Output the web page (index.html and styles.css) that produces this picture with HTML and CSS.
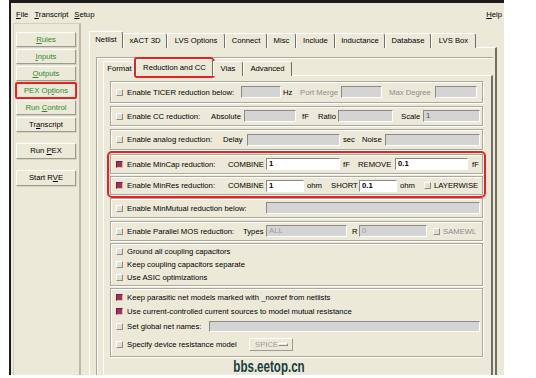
FILE: index.html
```html
<!DOCTYPE html>
<html lang="en">
<head>
  <meta charset="UTF-8">
  <title>Calibre Interactive - PEX</title>
  <link rel="stylesheet" href="styles.css">
</head>
<body>
  <div class="window">
    <div class="menubar">
      <span class="menu"><u>F</u>ile</span>
      <span class="menu"><u>T</u>ranscript</span>
      <span class="menu"><u>S</u>etup</span>
      <span class="menu help"><u>H</u>elp</span>
    </div>

    <div class="main">
      <div class="side">
        <div class="group">
          <div class="btn green"><u>R</u>ules</div>
          <div class="btn green"><u>I</u>nputs</div>
          <div class="btn green"><u>O</u>utputs</div>
          <div class="btn green marked">PEX Op<u>t</u>ions</div>
          <div class="btn green">Run <u>C</u>ontrol</div>
          <div class="btn">Tr<u>a</u>nscript</div>
        </div>
        <div class="group">
          <div class="btn tall">Run <u>P</u>EX</div>
        </div>
        <div class="group">
          <div class="btn tall">Start R<u>V</u>E</div>
        </div>
      </div>

      <div class="notebook">
        <div class="tabs">
          <div class="tab active t-netlist">Netlist</div>
          <div class="tab t-xact">xACT 3D</div>
          <div class="tab t-lvs">LVS Options</div>
          <div class="tab t-connect">Connect</div>
          <div class="tab t-misc">Misc</div>
          <div class="tab t-include">Include</div>
          <div class="tab t-induct">Inductance</div>
          <div class="tab t-db">Database</div>
          <div class="tab t-box">LVS Box</div>
        </div>
        <div class="page">
          <div class="inner">
            <div class="tabs sub">
              <div class="tab t-format">Format</div>
              <div class="tab active marked t-reduce">Reduction and CC</div>
              <div class="tab t-vias">Vias</div>
              <div class="tab t-adv">Advanced</div>
            </div>
            <div class="subpage">
              <div class="row r1">
                <span class="cb"></span>
                <span class="lbl w114">Enable TICER reduction below:</span>
                <span class="entry w40"></span>
                <span class="txt w19 pl2">Hz</span>
                <span class="txt dim w41">Port Merge</span>
                <span class="entry w41"></span>
                <span class="txt dim w53 pl7">Max Degree</span>
                <span class="entry w42"></span>
              </div>
              <div class="row r2">
                <span class="cb"></span>
                <span class="lbl w84">Enable CC reduction:</span>
                <span class="txt w33">Absolute</span>
                <span class="entry w52"></span>
                <span class="txt w22 pl6">fF</span>
                <span class="txt w20">Ratio</span>
                <span class="entry w55"></span>
                <span class="txt w30 pl8">Scale</span>
                <span class="entry w57 val">1</span>
              </div>
              <div class="row r3">
                <span class="cb"></span>
                <span class="lbl w96">Enable analog reduction:</span>
                <span class="txt w24">Delay</span>
                <span class="entry w93"></span>
                <span class="txt w22 pl3">sec</span>
                <span class="txt w23">Noise</span>
                <span class="entry w95"></span>
              </div>

              <div class="marked-rows">
                <div class="row r4">
                  <span class="cb on"></span>
                  <span class="lbl w101">Enable MinCap reduction:</span>
                  <span class="txt w38">COMBINE</span>
                  <span class="entry white w74">1</span>
                  <span class="txt w18 pl3">fF</span>
                  <span class="txt w37">REMOVE</span>
                  <span class="entry white w73">0.1</span>
                  <span class="txt pl4">fF</span>
                </div>
                <div class="row r5">
                  <span class="cb on"></span>
                  <span class="lbl w101">Enable MinRes reduction:</span>
                  <span class="txt w38">COMBINE</span>
                  <span class="entry white w38">1</span>
                  <span class="txt w27 pl3">ohm</span>
                  <span class="txt w28">SHORT</span>
                  <span class="entry white w38">0.1</span>
                  <span class="txt w27 pl3">ohm</span>
                  <span class="cb"></span>
                  <span class="txt pl3">LAYERWISE</span>
                </div>
              </div>

              <div class="row r6">
                <span class="cb"></span>
                <span class="lbl w139">Enable MinMutual reduction below:</span>
                <span class="entry w214"></span>
              </div>
              <div class="row r7">
                <span class="cb"></span>
                <span class="lbl w116">Enable Parallel MOS reduction:</span>
                <span class="txt w23">Types</span>
                <span class="entry w81 faded">ALL</span>
                <span class="txt w12 pl5">R</span>
                <span class="entry w68 faded">0</span>
                <span class="cb gap6"></span>
                <span class="txt dim pl3">SAMEWL</span>
              </div>

              <div class="box b1">
                <div class="item"><span class="cb"></span><span class="lbl">Ground all coupling capacitors</span></div>
                <div class="item"><span class="cb"></span><span class="lbl">Keep coupling capacitors separate</span></div>
                <div class="item"><span class="cb"></span><span class="lbl">Use ASIC optimizations</span></div>
              </div>

              <div class="box b2">
                <div class="item i1"><span class="cb on"></span><span class="lbl">Keep parasitic net models marked with _noxref from netlists</span></div>
                <div class="item i2"><span class="cb on"></span><span class="lbl">Use current-controlled current sources to model mutual resistance</span></div>
                <div class="item i3"><span class="cb"></span><span class="lbl w82">Set global net names:</span><span class="entry slim w271"></span></div>
                <div class="item i4"><span class="cb"></span><span class="lbl w122">Specify device resistance model</span><span class="optmenu">SPICE<span class="bar"></span></span></div>
              </div>
            </div>
          </div>
        </div>
      </div>
    </div>

    <div class="watermark">bbs.eetop.cn</div>
  </div>
</body>
</html>
```

FILE: styles.css
```css
:root {
  --bg: #ece9d8;
  --light: #ffffff;
  --shade: #aca899;
  --dark: #716f64;
  --field: #d4d4d4;
  --green: #2e8a2e;
  --check: #a3305c;
  --mark: #e8231f;
}

* {
  box-sizing: border-box;
}

body {
  margin: 0;
  background: #fff;
  font-family: "Liberation Sans", Arial, sans-serif;
  font-size: 7.7px;
  color: #000;
}

u {
  text-decoration-thickness: 1px;
  text-underline-offset: 1px;
}

.window {
  position: relative;
  width: 495px;
  height: 375px;
  margin-left: 9px;
  background: var(--bg);
  border-top: 3px solid #1c1c1c;
  border-left: 2px solid #1c1c1c;
  overflow: hidden;
}

/* menu bar */
.menubar {
  display: flex;
  align-items: center;
  height: 18px;
  padding: 4px 2px 0 2px;
  white-space: nowrap;
}

.menu {
  padding: 0 3px;
}

.help {
  margin-left: auto;
  padding-right: 0;
}

.main {
  display: flex;
  align-items: flex-start;
}

/* left button column */
.side {
  width: 68px;
  height: 360px;
  margin: 2px 0 0 2px;
  padding: 8px 3px 0 2px;
  border: 1px solid #d3d0c2;
  border-right: 2px solid #bcb9a9;
}

.group {
  margin-bottom: 11px;
}

.btn {
  height: 15px;
  margin-bottom: 2px;
  line-height: 13px;
  text-align: center;
  border: 1px solid;
  border-color: var(--light) #9d9b8d #9d9b8d var(--light);
  box-shadow: 1px 1px 0 #d6d3c5;
  white-space: nowrap;
}

.btn.tall {
  height: 16px;
  line-height: 14px;
}

.green {
  color: var(--green);
}

.marked {
  outline: 2px solid var(--mark);
  outline-offset: -1px;
  border-radius: 1px;
}

/* notebooks */
.notebook {
  width: 408px;
  margin: 11px 0 0 8px;
}

.tabs {
  display: flex;
  align-items: flex-end;
  height: 16px;
  position: relative;
  z-index: 1;
  margin-bottom: -1px;
}

.tab {
  height: 15px;
  line-height: 13px;
  text-align: center;
  border: 1px solid;
  border-bottom: none;
  border-color: var(--light) var(--dark) transparent var(--light);
  border-top-right-radius: 3px;
  background: var(--bg);
  white-space: nowrap;
}

.tab.active {
  height: 17px;
  line-height: 15px;
}

.t-netlist { width: 34px; }
.t-xact { width: 44px; }
.t-lvs { width: 58px; }
.t-connect { width: 42px; }
.t-misc { width: 29px; }
.t-include { width: 39px; }
.t-induct { width: 50px; }
.t-db { width: 46px; }
.t-box { width: 45px; }

.t-format { width: 33px; }
.t-reduce { width: 77px; }
.t-vias { width: 30px; }
.t-adv { width: 49px; }

.tab.marked {
  outline-offset: 0;
}

.page {
  height: 330px;
  padding: 9px 2px 0 6px;
  border-top: 1px solid var(--light);
  border-left: 1px solid var(--light);
  border-right: 2px solid var(--dark);
}

.inner {
  height: 330px;
  padding: 3px 0 0 6px;
  border-top: 1px solid var(--shade);
  border-left: 1px solid var(--shade);
  box-shadow: inset 1px 1px 0 var(--light);
}

.sub {
  height: 15px;
}

.subpage {
  height: 300px;
  padding: 5px 8px 0 6px;
  border-top: 1px solid var(--light);
  border-left: 1px solid var(--light);
  border-right: 2px solid var(--dark);
}

/* option rows */
.row,
.box {
  border: 1px solid var(--shade);
  box-shadow: inset 1px 1px 0 var(--light), 1px 1px 0 var(--light);
}

.row {
  display: flex;
  align-items: center;
  height: 20px;
  margin-bottom: 3px;
  padding-left: 5px;
  white-space: nowrap;
}

.r1 { height: 22px; }
.r3 { height: 21px; margin-bottom: 4px; }
.r4 { margin-bottom: 2px; }
.r5 { height: 19px; margin-bottom: 0; }
.r7 { margin-bottom: 2px; }

.marked-rows {
  margin-bottom: 3px;
  outline: 2px solid var(--mark);
  outline-offset: 1px;
  border-radius: 2px;
}

.cb {
  flex: none;
  width: 7px;
  height: 7px;
  border: 1px solid;
  border-color: var(--light) #8f8d80 #8f8d80 var(--light);
  background: #e2dfd0;
}

.cb.on {
  border-color: #6e1f3e #c9c6b8 #c9c6b8 #6e1f3e;
  background: var(--check);
}

.lbl {
  flex: none;
  margin-left: 4px;
}

.txt {
  flex: none;
}

.dim {
  color: #8c8c8c;
}

.entry {
  flex: none;
  height: 12px;
  padding-left: 2px;
  line-height: 10px;
  background: var(--field);
  border: 1px solid;
  border-color: #8a8a86 var(--light) var(--light) #8a8a86;
}

.entry.white {
  background: #fff;
  font-weight: bold;
}

.entry.val {
  color: #555;
}

.entry.faded {
  color: #9c9c9c;
}

.entry.slim {
  height: 11px;
}

.pl2 { padding-left: 2px; }
.pl3 { padding-left: 3px; }
.pl4 { padding-left: 4px; }
.pl5 { padding-left: 5px; }
.pl6 { padding-left: 6px; }
.pl7 { padding-left: 7px; }
.pl8 { padding-left: 8px; }
.gap6 { margin-left: 6px; }

.w12 { width: 12px; }
.w18 { width: 18px; }
.w19 { width: 19px; }
.w20 { width: 20px; }
.w22 { width: 22px; }
.w23 { width: 23px; }
.w24 { width: 24px; }
.w27 { width: 27px; }
.w28 { width: 28px; }
.w30 { width: 30px; }
.w33 { width: 33px; }
.w37 { width: 37px; }
.w38 { width: 38px; }
.w40 { width: 40px; }
.w41 { width: 41px; }
.w42 { width: 42px; }
.w52 { width: 52px; }
.w53 { width: 53px; }
.w55 { width: 55px; }
.w57 { width: 57px; }
.w68 { width: 68px; }
.w73 { width: 73px; }
.w74 { width: 74px; }
.w81 { width: 81px; }
.w82 { width: 82px; }
.w84 { width: 84px; }
.w93 { width: 93px; }
.w95 { width: 95px; }
.w96 { width: 96px; }
.w101 { width: 101px; }
.w114 { width: 114px; }
.w116 { width: 116px; }
.w122 { width: 122px; }
.w139 { width: 139px; }
.w214 { width: 214px; }
.w271 { width: 271px; }

/* grouped check boxes */
.box {
  padding: 1px 0 1px 5px;
  margin-bottom: 2px;
}

.item {
  display: flex;
  align-items: center;
  height: 13px;
  white-space: nowrap;
}

.b2 .i1 { height: 14px; }
.b2 .i2 { height: 15px; }
.b2 .i3 { height: 14px; }
.b2 .i4 { height: 22px; }

.optmenu {
  display: flex;
  align-items: center;
  justify-content: space-between;
  width: 44px;
  height: 13px;
  padding: 0 4px 0 5px;
  color: #9c9c9c;
  border: 1px solid;
  border-color: var(--light) #9d9b8d #9d9b8d var(--light);
}

.bar {
  width: 10px;
  height: 3px;
  border: 1px solid;
  border-color: var(--light) #8f8d80 #8f8d80 var(--light);
}

.watermark {
  position: absolute;
  left: 203px;
  top: 354px;
  width: 110px;
  text-align: center;
  font-size: 17px;
  font-weight: bold;
  color: #123f40;
  transform: scaleX(0.68);
}
```
